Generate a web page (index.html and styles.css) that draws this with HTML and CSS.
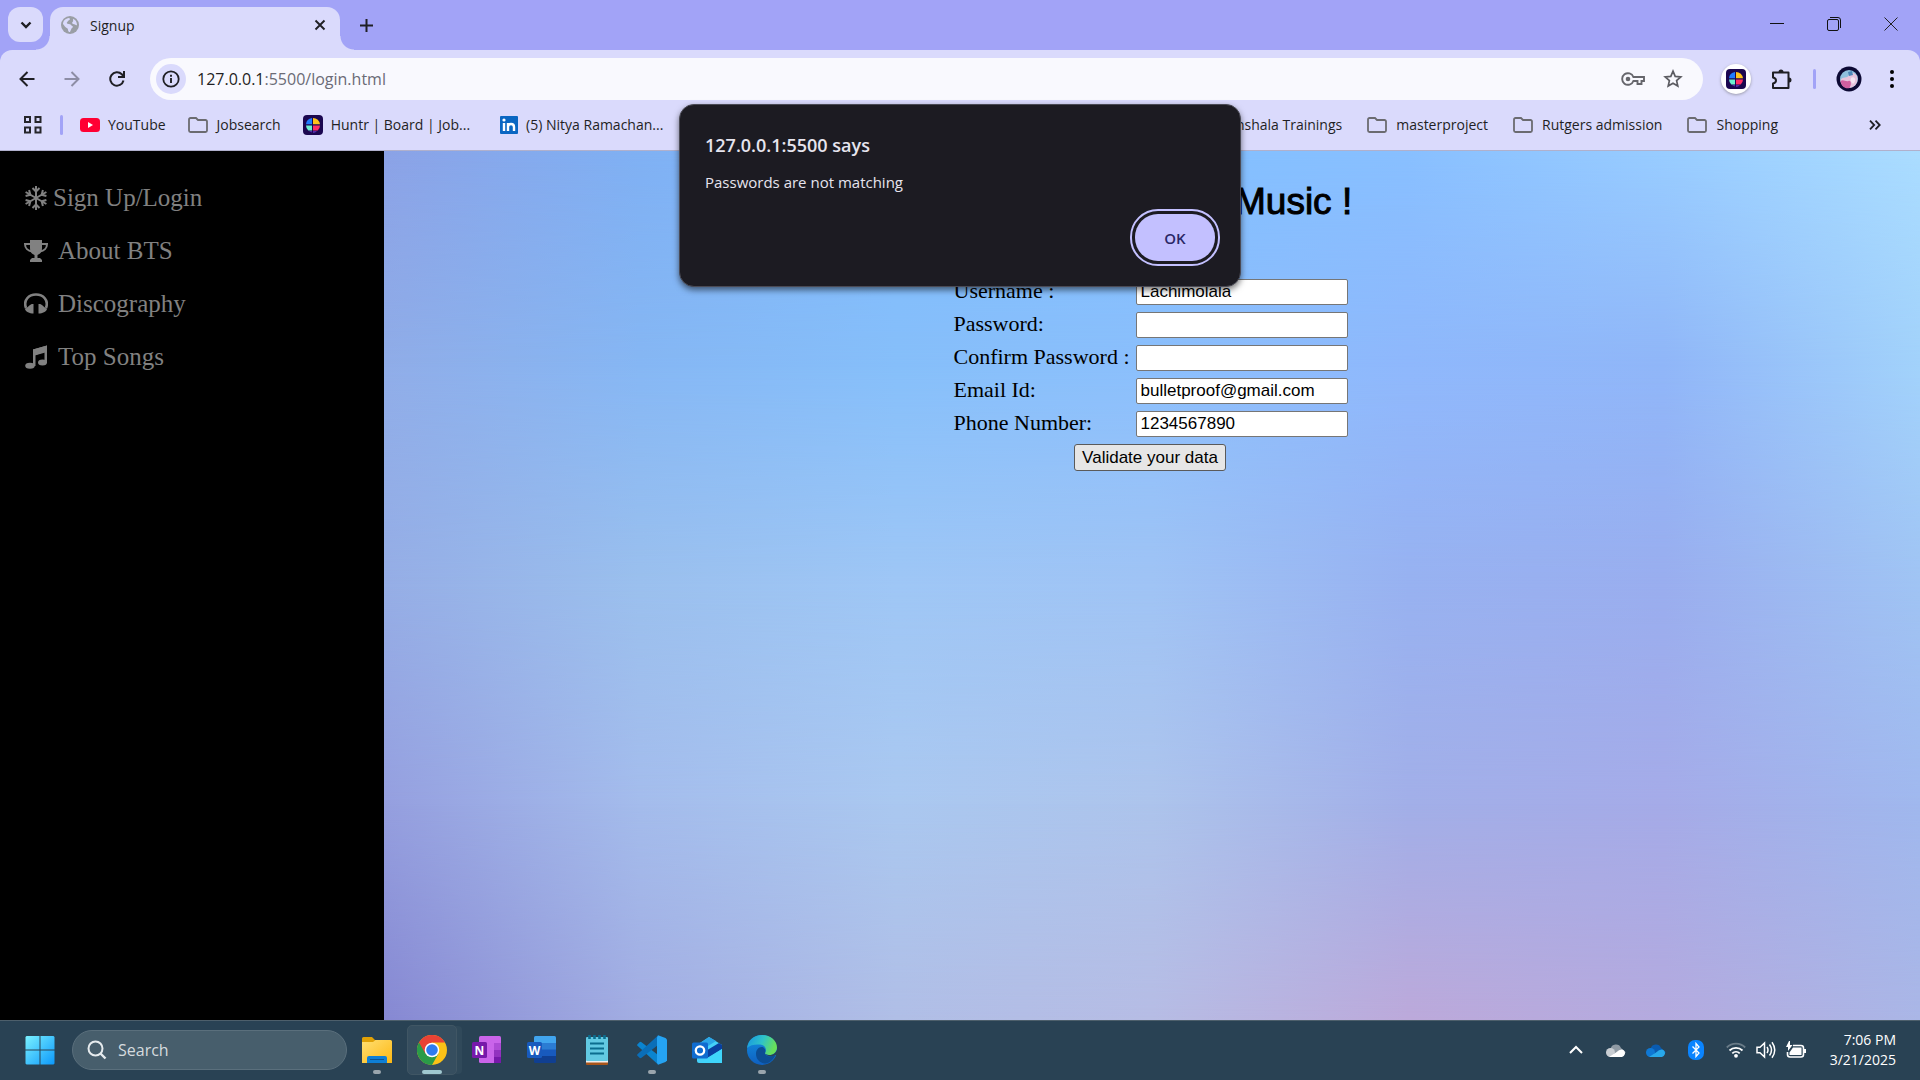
FILE: index.html
```html
<!DOCTYPE html>
<html lang="en">
<head>
<meta charset="utf-8">
<title>Signup</title>
<link rel="stylesheet" href="styles.css">
</head>
<body>
<svg class="sprite" aria-hidden="true">
  <defs>
    <symbol id="folder" viewBox="0 0 20 16"><path d="M1 3.200V13.500A1.500 1.500 0 0 0 2.500 15H17.500A1.500 1.500 0 0 0 19 13.500V4.500A1.500 1.500 0 0 0 17.500 3H10L8 1H2.500A1.500 1.500 0 0 0 1 2.500Z" fill="none" stroke="#6b6b70" stroke-width="1.800"/></symbol>
    <symbol id="huntr" viewBox="0 0 20 20">
      <rect width="20" height="20" rx="4" fill="#1b0750"/>
      <path d="M9 3A7 7 0 0 0 3 9.300H9Z" fill="#1f7bff"/>
      <path d="M10 3A7 7 0 0 1 17 9.300H10Z" fill="#ffc21a"/>
      <path d="M3 10.500H9V15.500H5.300A7 7 0 0 1 3 10.500Z" fill="#6cf0d0"/>
      <path d="M10 10.500H17A7 7 0 0 1 14.700 15.500H10Z" fill="#ff2d66"/>
      <path d="M6 16.500H9V17.300A7 7 0 0 1 6 16.500ZM10 16.500H14A7 7 0 0 1 10 17.500Z" fill="#8a4dff"/>
    </symbol>
  </defs>
</svg>

<header class="chrome">
  <div class="tabstrip">
    <button class="tab-search" aria-label="Search tabs"><svg width="12" height="8" viewBox="0 0 12 8"><path d="M1.500 1.500 6 6l4.500-4.500" fill="none" stroke="#1f1f24" stroke-width="2.400"/></svg></button>
    <div class="tab">
      <svg width="18" height="18" viewBox="0 0 18 18"><circle cx="9" cy="9" r="9" fill="#9a9ea5"/><path d="M2 8C2 5 4.500 2.300 8 2c1.500.5 1 1.800 0 2.200C6.500 4.500 7 6 5.800 6.500 5.500 8 7 8 9 8.200c1.500.3 1.200 1.800 2.800 2 .5 1.500-1.300 1.600-1.500 2.800L9 16C6.500 16 7.500 13.500 6.500 12.500 4 11.500 3.500 9.500 2 8Zm10-5.300C14.500 3.500 16 6 16 9c-1 .8-1.700-.8-2.800-.8C11.500 8 10.500 7 11.500 6c1-.7.500-2 .5-3.300Z" fill="#dadafc"/></svg>
      <span class="tab-title">Signup</span>
      <button class="icon-btn" aria-label="Close tab"><svg width="12" height="12" viewBox="0 0 12 12"><path d="M1.500 1.500l9 9M10.500 1.500l-9 9" stroke="#1f1f24" stroke-width="1.900"/></svg></button>
    </div>
    <button class="icon-btn new-tab" aria-label="New tab"><svg width="13" height="13" viewBox="0 0 13 13"><path d="M6.500 0v13M0 6.500h13" stroke="#1f1f24" stroke-width="2"/></svg></button>
    <div class="window-controls">
      <button class="icon-btn" aria-label="Minimize"><svg width="14" height="14" viewBox="0 0 14 14"><path d="M0 6.500h14" stroke="#111" /></svg></button>
      <button class="icon-btn" aria-label="Restore"><svg width="14" height="14" viewBox="0 0 14 14"><rect x=".5" y="2.500" width="11" height="11" rx="1.500" fill="none" stroke="#111"/><path d="M3 .5h8a2.500 2.500 0 0 1 2.500 2.500v8" fill="none" stroke="#111"/></svg></button>
      <button class="icon-btn" aria-label="Close"><svg width="14" height="14" viewBox="0 0 14 14"><path d="M.5.5l13 13M13.500.5l-13 13" stroke="#222"/></svg></button>
    </div>
  </div>

  <div class="toolbar">
    <nav class="history">
      <button class="icon-btn" aria-label="Back"><svg width="16" height="16" viewBox="0 0 16 16"><path d="M15.500 8H2M8.500 1 1.500 8l7 7" fill="none" stroke="#1f1f24" stroke-width="2"/></svg></button>
      <button class="icon-btn" aria-label="Forward"><svg width="16" height="16" viewBox="0 0 16 16"><path d="M.5 8H14M7.500 1l7 7-7 7" fill="none" stroke="#8d8da5" stroke-width="2"/></svg></button>
      <button class="icon-btn" aria-label="Reload"><svg width="16" height="16" viewBox="0 0 16 16"><path d="M14.500 9.500A6.700 6.700 0 1 1 12.800 3.300L14.800 5.500M15 0v6H9" fill="none" stroke="#1f1f24" stroke-width="2"/></svg></button>
    </nav>
    <div class="address">
      <button class="site-info" aria-label="Site information"><svg width="18" height="18" viewBox="0 0 18 18"><circle cx="9" cy="9" r="7.700" fill="none" stroke="#1f1f24" stroke-width="1.800"/><path d="M9 8v5M9 4.800v2" stroke="#1f1f24" stroke-width="1.900"/></svg></button>
      <span class="url">127.0.0.1<span class="url-path">:5500/login.html</span></span>
      <button class="icon-btn" aria-label="Passwords"><svg width="24" height="14" viewBox="0 0 24 14"><path d="M12.400 5A5.800 5.800 0 1 0 12.400 9H16.500V12H20.500V9H23V5Z" fill="none" stroke="#66666c" stroke-width="1.900"/><circle cx="7" cy="7" r="2.300" fill="#66666c"/></svg></button>
      <button class="icon-btn star" aria-label="Bookmark"><svg width="20" height="20" viewBox="0 0 20 20"><path d="M10 2.200l2.200 5.200 5.600.5-4.200 3.700 1.200 5.500L10 14.200l-4.800 2.900 1.200-5.500L2.200 7.900l5.600-.5Z" fill="none" stroke="#5c5c62" stroke-width="1.700"/></svg></button>
    </div>
    <div class="actions">
      <button class="ext" aria-label="Huntr"><svg width="20" height="20"><use href="#huntr"/></svg></button>
      <button class="icon-btn" aria-label="Extensions"><svg width="22" height="22" viewBox="0 0 22 22"><path d="M2 4.500H17.500V20H2V15.500C4.500 15 5 13.800 5 12.500S4.500 10 2 9.500Z" fill="none" stroke="#1f1f24" stroke-width="2" stroke-linejoin="round"/><path d="M7.500 4a2.500 2.500 0 0 1 5 0ZM18 9.500a2.500 2.500 0 0 1 0 5Z" fill="#1f1f24"/></svg></button>
      <span class="divider"></span>
      <button class="icon-btn" aria-label="Profile"><svg width="26" height="26" viewBox="0 0 26 26"><circle cx="13" cy="13" r="12.500" fill="#0c0934"/><circle cx="13" cy="13" r="9" fill="#8fc0de"/><path d="M4.500 14C7 10 11 13 13 9s6-2 8 1c2 8-3.500 12-8.500 12s-8-4-8-8Z" fill="#e6c3dc"/><path d="M4.500 15c3-2 5 1 8 0s3 4 1 7c-4 1-8-1-9-7Z" fill="#cf5f9f"/><path d="M15 12c2-2 5 0 4 3s-2 3-3 2-2-3-1-5Z" fill="#f4e4f2"/><path d="M12 6l4-1 1 4-4 1Z" fill="#4c86b8"/></svg></button>
      <button class="icon-btn menu" aria-label="Menu"><svg width="4" height="18" viewBox="0 0 4 18"><circle cx="2" cy="2" r="2"/><circle cx="2" cy="9" r="2"/><circle cx="2" cy="16" r="2"/></svg></button>
    </div>
  </div>

  <nav class="bookmarks">
    <button class="icon-btn" aria-label="Apps"><svg width="20" height="20" viewBox="0 0 20 20"><path d="M2 2h5v5H2ZM12.500 2h5v5h-5ZM2 12.500h5v5H2ZM12.500 12.500h5v5h-5Z" fill="none" stroke="#26262b" stroke-width="2"/></svg></button>
    <span class="divider"></span>
    <a href="#"><svg width="20" height="14" viewBox="0 0 20 14"><rect width="20" height="14" rx="3.500" fill="#ff0033"/><path d="M8 4v6l5-3Z" fill="#fff"/></svg>YouTube</a>
    <a class="folder" href="#"><svg width="20" height="16"><use href="#folder"/></svg>Jobsearch</a>
    <a href="#"><svg width="20" height="20"><use href="#huntr"/></svg>Huntr | Board | Job...</a>
    <a class="linkedin" href="#"><svg width="18" height="18" viewBox="0 0 18 18"><rect width="18" height="18" rx="1" fill="#0a66c2"/><path d="M4 7v8M8 15V7M8 11c0-4 6-4 6 0v4" fill="none" stroke="#fff" stroke-width="2.400"/><circle cx="4" cy="4" r="1.600" fill="#fff"/></svg>(5) Nitya Ramachan...</a>
    <div class="bookmarks-end">
      <a href="#">Internshala Trainings</a>
      <a class="folder" href="#"><svg width="20" height="16"><use href="#folder"/></svg>masterproject</a>
      <a class="folder" href="#"><svg width="20" height="16"><use href="#folder"/></svg>Rutgers admission</a>
      <a class="folder" href="#"><svg width="20" height="16"><use href="#folder"/></svg>Shopping</a>
      <button class="icon-btn more" aria-label="More bookmarks"><svg width="12" height="10" viewBox="0 0 12 10"><path d="M1 .7 5.200 5 1 9.300M6.500.7 10.700 5 6.500 9.300" fill="none" stroke="#1f1f24" stroke-width="1.800"/></svg></button>
    </div>
  </nav>
</header>

<div class="page">
  <nav class="sidebar">
    <a href="#"><svg width="24" height="26" viewBox="0 0 24 26"><g fill="none" stroke="#818181" stroke-width="2"><path id="arm" d="M12 1v24M8.500 3l3.500 3.500L15.500 3M8.500 23l3.500-3.500 3.500 3.500"/><use href="#arm" transform="rotate(60 12 13)"/><use href="#arm" transform="rotate(120 12 13)"/></g></svg>Sign Up/Login</a>
    <a class="spaced" href="#"><svg width="24" height="24" viewBox="0 0 24 24"><path d="M6 1h12v8c0 4-2 6-4.500 7v3H16l2 2v2H6v-2l2-2h2.500v-3C8 15 6 13 6 9Z" fill="#818181"/><path d="M6 5H1c0 4 3 7 7 7.500M18 5h5c0 4-3 7-7 7.500" fill="none" stroke="#818181" stroke-width="2"/></svg>About BTS</a>
    <a class="spaced" href="#"><svg width="24" height="24" viewBox="0 0 24 24"><path d="M2 16C-1 8 5 2.500 12 2.500S25 8 22 16" fill="none" stroke="#818181" stroke-width="2.600"/><path d="M9.500 12v9.500H8C4 21 1 19 1 16.500c3-.5 5-4.500 7-4.500ZM14.500 12v9.500H16c4-.5 7-2.500 7-5-3-.5-5-4.500-7-4.500Z" fill="#818181"/></svg>Discography</a>
    <a class="spaced" href="#"><svg width="24" height="24" viewBox="0 0 24 24"><path d="M9 4.500 23 .5V18H20.500V7L11.500 10V21H9Z" fill="#818181"/><path d="M9 4.500 23 .5V7L9 11Z" fill="#818181"/><ellipse cx="6" cy="20.800" rx="4.800" ry="3" fill="#818181"/><ellipse cx="18.500" cy="17.500" rx="4.500" ry="3" fill="#818181"/></svg>Top Songs</a>
  </nav>

  <main class="content">
    <div class="backdrop"><i></i><i></i><i></i><i></i></div>
    <h1>Welcome to BTS Music !</h1>
    <form>
      <table>
        <tr><td><label for="user">Username :</label></td><td><input id="user" type="text" value="Lachimolala"></td></tr>
        <tr><td><label for="pass">Password:</label></td><td><input id="pass" type="password"></td></tr>
        <tr><td><label for="confirm">Confirm Password :</label></td><td><input id="confirm" type="password"></td></tr>
        <tr><td><label for="email">Email Id:</label></td><td><input id="email" type="text" value="bulletproof@gmail.com"></td></tr>
        <tr><td><label for="phone">Phone Number:</label></td><td><input id="phone" type="text" value="1234567890"></td></tr>
        <tr><td class="submit" colspan="2"><button type="button">Validate your data</button></td></tr>
      </table>
    </form>
  </main>
</div>

<section class="dialog" role="alertdialog" aria-labelledby="dialog-title">
  <h2 id="dialog-title">127.0.0.1:5500 says</h2>
  <p>Passwords are not matching</p>
  <button>OK</button>
</section>

<footer class="taskbar">
  <button class="app start" aria-label="Start"><svg width="30" height="30" viewBox="0 0 30 30"><defs><linearGradient id="win" gradientUnits="userSpaceOnUse" x1="0" y1="0" x2="30" y2="30"><stop stop-color="#7df3ff"/><stop offset="1" stop-color="#0a97fb"/></linearGradient></defs><path d="M1.500 1H14.500V14.500H.5V2ZM15.500 1H28.500L29.500 2V14.500H15.500ZM.5 15.500H14.500V29.500H1.500L.5 28.500ZM15.500 15.500H29.500V28.500L28.500 29.500H15.500Z" fill="url(#win)"/></svg></button>
  <label class="search">
    <svg width="20" height="20" viewBox="0 0 20 20"><circle cx="8.500" cy="8.500" r="7" fill="none" stroke="#e6ebee" stroke-width="2"/><path d="M13.500 13.500l5 5" stroke="#e6ebee" stroke-width="2.400"/></svg>
    <input type="text" placeholder="Search" aria-label="Search">
  </label>
  <div class="apps">
    <button class="app running" aria-label="File Explorer"><svg width="30" height="30" viewBox="0 0 30 30"><defs><linearGradient id="fe" x1="0" y1="0" x2="1" y2="1"><stop stop-color="#ffdf72"/><stop offset="1" stop-color="#fdb813"/></linearGradient></defs><path d="M0 3.500A1.500 1.500 0 0 1 1.500 2H10L13 5H28V12H0Z" fill="#e0a106"/><path d="M0 7H11L13.500 5H28.500A1.500 1.500 0 0 1 30 6.500V28H0Z" fill="url(#fe)"/><path d="M5 28V23A2 2 0 0 1 7 21H23A2 2 0 0 1 25 23V28Z" fill="#0e7fd6"/><path d="M8 24.500H22" stroke="#0b5392"/></svg></button>
    <button class="app active" aria-label="Chrome"><svg width="30" height="30" viewBox="0 0 30 30"><circle cx="15" cy="15" r="15" fill="#fbc116"/><path d="M15 15 2 7.500A15 15 0 0 0 15 30L21.500 18.500Z" fill="#2a9b48"/><path d="M2 7.500A15 15 0 0 1 28 7.500H15L8.500 18.700Z" fill="#e94235"/><circle cx="15" cy="15" r="7.300" fill="#fff"/><circle cx="15" cy="15" r="5.800" fill="#2e7bf0"/></svg></button>
    <button class="app" aria-label="OneNote"><svg width="30" height="30" viewBox="0 0 30 30"><rect x="7" y="1" width="22" height="27" rx="1.500" fill="#ca64ea"/><path d="M22 8h7v7h-7Z" fill="#ae4bd5"/><path d="M22 15h7v6.500h-7Z" fill="#9332bf"/><path d="M22 21.500h7V28h-7Z" fill="#7719aa"/><rect y="7" width="15" height="16" rx="1.500" fill="#7719aa"/><text x="7.500" y="19.500">N</text></svg></button>
    <button class="app" aria-label="Word"><svg width="30" height="30" viewBox="0 0 30 30"><rect x="7" y="1" width="22" height="27" rx="1.500" fill="#103f91"/><path d="M7 14h22v7H7Z" fill="#185abd"/><path d="M7 8h22v6.500H7Z" fill="#2b7cd3"/><path d="M8.500 1h19A1.500 1.500 0 0 1 29 2.500V8H7V2.500A1.500 1.500 0 0 1 8.500 1Z" fill="#41a5ee"/><rect y="7" width="15" height="16" rx="1.500" fill="#185abd"/><text x="7.500" y="19.500">W</text></svg></button>
    <button class="app" aria-label="Notepad"><svg width="30" height="30" viewBox="0 0 30 30"><rect x="4" y="24" width="22" height="6" rx="1" fill="#a8551a"/><rect x="4" y="24" width="22" height="3.500" fill="#eee"/><rect x="4" y="2" width="22" height="24" rx="1" fill="#62c9e2"/><path d="M8 8.500H22M8 13.500H22M8 18.500H22" stroke="#0b6d8e" stroke-width="2"/><path d="M7.500 0v4M12.500 0v4M17.500 0v4M22.500 0v4" stroke="#0b6d8e" stroke-width="2.600"/></svg></button>
    <button class="app running" aria-label="Visual Studio Code"><svg width="30" height="30" viewBox="0 0 30 30"><path d="M.5 10.800a1 1 0 0 1 0-1.500L2.500 7.300a1.500 1.500 0 0 1 2 0L23 21.500 21 29.500Z" fill="#0a84d0"/><path d="M.5 19.200a1 1 0 0 0 0 1.500L2.500 22.700a1.500 1.500 0 0 0 2 0L23 8.500 21 .5Z" fill="#0a6eb8"/><path d="M21 .3 28.500 3 30 4.500V25.500L28.500 27 21 29.700 20 27.500V2.500Z" fill="#25a3f2"/></svg></button>
    <button class="app" aria-label="Outlook"><svg width="30" height="30" viewBox="0 0 30 30"><path d="M5 10 17 2l13 8v16a2 2 0 0 1-2 2H7a2 2 0 0 1-2-2Z" fill="#45d0f8"/><path d="M5 10 17 2 24 6 8 16Z" fill="#2aa5e8"/><path d="M12 17 27 8l3 2v4L15 23Z" fill="#0a3f9f"/><path d="M16 23 30 14V28H9Z" fill="#3fd5fb"/><rect y="7.500" width="16" height="16" rx="1.500" fill="#0f6cd0"/><circle cx="8" cy="15.500" r="4.200" fill="none" stroke="#fff" stroke-width="2.300"/></svg></button>
    <button class="app running" aria-label="Edge"><svg width="30" height="30" viewBox="0 0 30 30"><defs><linearGradient id="e1" x1="0" y1="0" x2="1" y2=".3"><stop stop-color="#1694e4"/><stop offset=".55" stop-color="#2fc3c8"/><stop offset="1" stop-color="#68e05a"/></linearGradient><linearGradient id="e2" x1="0" y1="0" x2="0" y2="1"><stop stop-color="#1290e0"/><stop offset="1" stop-color="#0f5fc0"/></linearGradient></defs><circle cx="15" cy="15" r="15" fill="url(#e2)"/><path d="M0 13C1 5 7 0 15 0c9 0 15 6 15 12.500 0 5-4 7.500-7.500 7.500-3 0-5-1-4.500-2 2-3 1-8-5-8.500C8 9 3 10 0 13Z" fill="url(#e1)"/><path d="M9 19c0-5 4-8 7.500-6.500C19.500 15 18 17 18 18.500 19 22 25 22 28.500 20 26 26 21 28.500 17.500 28.500 13 28 9 24 9 19Z" fill="#0c4d94"/><path d="M18 18c.5 1.500 2.500 2 4.500 2C26 20 29 18 30 14.500V20L28.500 20C25 22 19.500 22 18 18Z" fill="#294254"/></svg></button>
  </div>
  <div class="tray">
    <button class="app" aria-label="Show hidden icons"><svg width="14" height="10" viewBox="0 0 14 10"><path d="M1 8l6-6 6 6" fill="none" stroke="#fff" stroke-width="2"/></svg></button>
    <button class="app" aria-label="Cloud"><svg width="20" height="13" viewBox="0 0 20 13"><path d="M4.500 5A5.500 5.500 0 0 1 15 4L20 8.500 10 10Z" fill="#8f9aa4"/><circle cx="4.500" cy="8.500" r="4.500" fill="#c9ced3"/><path d="M3 13 10 8.500Q15 4 18 6.500A4 4 0 0 1 16 13Z" fill="#fff"/></svg></button>
    <button class="app" aria-label="OneDrive"><svg width="20" height="13" viewBox="0 0 20 13"><path d="M4.500 5A5.500 5.500 0 0 1 15 4L20 8.500 10 10Z" fill="#0a5bb0"/><circle cx="4.500" cy="8.500" r="4.500" fill="#0f78d4"/><path d="M3 13 10 8.500Q15 4 18 6.500A4 4 0 0 1 16 13Z" fill="#28a8ea"/></svg></button>
    <button class="app" aria-label="Bluetooth"><svg width="16" height="20" viewBox="0 0 16 20"><rect width="16" height="20" rx="7" fill="#0a84ff"/><path d="M4.500 6.500 11 13l-3 3.500V3.500L11 7l-6.500 6.500" fill="none" stroke="#fff" stroke-width="1.300"/></svg></button>
    <button class="status" aria-label="Network, volume and battery">
      <svg width="20" height="16" viewBox="0 0 20 16"><g fill="none" stroke="#fff" stroke-width="1.800"><path d="M.8 5.500a13 13 0 0 1 18.400 0" opacity=".3"/><path d="M3.500 8.500a9.300 9.300 0 0 1 13 0M6.300 11.300a5.300 5.300 0 0 1 7.400 0"/></g><circle cx="10" cy="13.800" r="1.900" fill="#fff"/></svg>
      <svg width="20" height="18" viewBox="0 0 20 18"><path d="M1 6.200H4L8.500 2V16L4 11.800H1ZM11 6q2 3 0 6M13.500 3.500q4 5.500 0 11M16 1.200q5.500 7.800 0 15.600" fill="none" stroke="#fff" stroke-width="1.500"/></svg>
      <svg width="20" height="18" viewBox="0 0 20 18"><path d="M7 4.500H15A2.500 2.500 0 0 1 17.500 7V13.500A2.500 2.500 0 0 1 15 16H4A2.500 2.500 0 0 1 1.500 13.500V11" fill="none" stroke="#fff" stroke-width="1.600"/><path d="M7 6.500H15.500V14H3.500V11.500ZM18 8h2v4h-2ZM3 0 0 6H2V10L6.500 4H4V0Z" fill="#fff"/></svg>
    </button>
    <div class="clock"><span>7:06 PM</span><span>3/21/2025</span></div>
  </div>
</footer>
</body>
</html>
```

FILE: styles.css
```css
* { box-sizing: border-box; }

body {
  margin: 0;
  min-height: 100vh;
  display: flex;
  flex-direction: column;
  position: relative;
  font-family: "Open Sans", "Noto Sans", sans-serif;
  font-size: 14px;
  color: #1f1f24;
}

svg { display: block; flex: none; }
.sprite { position: absolute; width: 0; height: 0; }
button { font-family: inherit; }
a { color: inherit; text-decoration: none; }

.icon-btn {
  display: flex;
  align-items: center;
  justify-content: center;
  padding: 0;
  border: 0;
  background: none;
}

.divider { width: 3px; height: 20px; border-radius: 2px; background: #a2a3f7; }

/* Browser frame */
.chrome { background: #a2a3f7; }

.tabstrip {
  display: flex;
  align-items: flex-start;
  height: 50px;
  padding: 7px 22px 0 8px;
}

.tab-search {
  display: flex;
  align-items: center;
  justify-content: center;
  width: 35px;
  height: 35px;
  margin-right: 7px;
  padding: 0;
  border: 0;
  border-radius: 12px;
  background: #dadafc;
}

.tab {
  position: relative;
  display: flex;
  align-items: center;
  gap: 11px;
  width: 290px;
  height: 43px;
  padding: 0 14px 7px 11px;
  border-radius: 13px 13px 0 0;
  background: #dadafc;
}

.tab::before,
.tab::after {
  content: "";
  position: absolute;
  bottom: 0;
  width: 14px;
  height: 14px;
}
.tab::before { right: 100%; background: radial-gradient(circle at 0 0, transparent 13px, #dadafc 14px); }
.tab::after { left: 100%; background: radial-gradient(circle at 100% 0, transparent 13px, #dadafc 14px); }
.tab-title { flex: 1; }

.new-tab { width: 30px; height: 36px; margin-left: 11px; }

.window-controls { display: flex; gap: 43px; height: 34px; margin-left: auto; }

.toolbar {
  display: flex;
  align-items: center;
  height: 59px;
  padding: 0 26px 1px 19px;
  border-radius: 12px 12px 0 0;
  background: #dadafc;
}

.history { display: flex; gap: 29px; width: 131px; }

.address {
  display: flex;
  align-items: center;
  flex: 1;
  height: 42px;
  padding: 0 20px 0 6px;
  border-radius: 21px;
  background: #f9f9fe;
}

.site-info {
  display: flex;
  align-items: center;
  justify-content: center;
  width: 30px;
  height: 30px;
  padding: 0;
  border: 0;
  border-radius: 50%;
  background: #dadafc;
}

.url { flex: 1; margin-left: 11px; font-size: 16px; }
.url-path { color: #6b6b76; }
.star { margin-left: 18px; }

.actions { display: flex; align-items: center; gap: 20px; margin-left: 18px; }
.menu { margin-left: 8px; }

.ext {
  display: flex;
  align-items: center;
  justify-content: center;
  width: 30px;
  height: 30px;
  padding: 0;
  border: 0;
  border-radius: 50%;
  background: #fff;
  box-shadow: 0 1px 3px #6668;
}

.bookmarks {
  display: flex;
  align-items: center;
  gap: 22px;
  height: 42px;
  padding: 0 39px 10px 23px;
  border-bottom: 1px solid #b0b0cc;
  background: #dadafc;
}

.bookmarks > .divider { margin: 0 -5px; }
.bookmarks a { display: flex; align-items: center; gap: 8px; white-space: nowrap; }
.bookmarks .folder { gap: 9px; }
.linkedin { margin-left: 8px; }
.bookmarks-end { display: flex; align-items: center; gap: 25px; margin-left: auto; }
.more { margin-left: 66px; }

/* Web page */
.page { flex: 1; display: flex; }

.sidebar {
  width: 20%;
  padding: 20px 0 0 24px;
  background: #000;
  color: #818181;
  font: 25px/53px "Liberation Serif", serif;
}
.sidebar a { display: flex; align-items: center; gap: 5px; }
.sidebar .spaced { gap: 10px; }

.content {
  position: relative;
  flex: 1;
  display: flex;
  flex-direction: column;
  align-items: center;
  padding: 28px 4px 0 0;
  color: #000;
  font: 22px/26px "Liberation Serif", serif;
  background: linear-gradient(to right, #96aee6, #9bc0ee, #9fc7f6, #a0c4f5, #98b2f1, #9aaeef, #a0c4f4);
}

/* The backdrop blends horizontal gradients into one another down the page */
.backdrop i { position: absolute; inset: 0; }
.backdrop i:nth-child(1) {
  background: linear-gradient(to right, #90ade8, #86b7f4, #86bffa, #8bbffc, #8fb8fc, #90b6f8, #a2d2fb);
  -webkit-mask-image: linear-gradient(#000 25%, transparent 50%);
  mask-image: linear-gradient(#000 25%, transparent 50%);
}
.backdrop i:nth-child(2) {
  background: linear-gradient(to right, #8ba2e6, #7fb0f3, #80bcff, #82bfff, #88bfff, #98ccff, #aadcff);
  -webkit-mask-image: linear-gradient(#000, transparent 25%);
  mask-image: linear-gradient(#000, transparent 25%);
}
.backdrop i:nth-child(3) {
  background: linear-gradient(to right, #959fdf, #a4bcec, #aac8f0, #adc4ec, #a2afe8, #a5abe8, #a0b8ee);
  -webkit-mask-image: linear-gradient(transparent 50%, #000 75%);
  mask-image: linear-gradient(transparent 50%, #000 75%);
}
.backdrop i:nth-child(4) {
  background: linear-gradient(to right, #8688d2, #a2ade2, #b0bee6, #b6bce4, #bca9da, #b4aade, #aab6e6);
  -webkit-mask-image: linear-gradient(transparent 75%, #000);
  mask-image: linear-gradient(transparent 75%, #000);
}

.content h1,
.content form { position: relative; }

.content h1 {
  margin: 0 0 49px;
  font: 37px/46px "Liberation Sans", sans-serif;
  -webkit-text-stroke: 1px #000;
}

.content table { border-spacing: 3px; }
.content td { height: 30px; padding: 0 1px 2px; }
.content td:first-child { width: 180px; }
.content td + td,
.content td.submit { padding: 0; }
.content label { display: block; }

.content input {
  display: block;
  width: 212px;
  height: 26px;
  padding: 1px 4px;
  border: 1px solid #767676;
  border-radius: 2px;
  background: #fff;
  font: 17px "Liberation Sans", sans-serif;
}

.content .submit { text-align: center; }
.content .submit button {
  width: 152px;
  height: 27px;
  padding: 0;
  border: 1px solid #5a5a5a;
  border-radius: 3px;
  background: #e6e6e6;
  color: #000;
  font: 17px "Liberation Sans", sans-serif;
}

/* Alert over the page */
.dialog {
  position: absolute;
  top: 104px;
  left: 50%;
  display: flex;
  flex-direction: column;
  width: 562px;
  margin-left: -281px;
  padding: 24px 25px 25px;
  border: 1px solid #4a4a55;
  border-radius: 15px;
  background: #1c1b22;
  box-shadow: 0 3px 6px #0008;
  color: #e6e4ee;
}
.dialog h2 { margin: 0; font-size: 18px; font-weight: 600; line-height: 32px; }
.dialog p { margin: 9px 0 20px; font-size: 15px; line-height: 24px; }
.dialog button {
  align-self: flex-end;
  width: 80px;
  height: 47px;
  border: 0;
  border-radius: 23px;
  outline: 2px solid #c3c0ff;
  outline-offset: 3px;
  background: #c3c0ff;
  color: #2a2766;
  font-size: 15px;
  font-weight: 600;
}

/* Taskbar */
.taskbar {
  display: flex;
  align-items: center;
  height: 60px;
  padding: 0 24px 1px 15px;
  border-top: 1px solid #4d5f6b;
  background: #294254;
  color: #fff;
}

.app {
  position: relative;
  display: flex;
  align-items: center;
  justify-content: center;
  width: 50px;
  height: 50px;
  padding: 0;
  border: 1px solid transparent;
  border-radius: 5px;
  background: none;
}
.app text { fill: #fff; font: bold 12px "Open Sans", sans-serif; text-anchor: middle; }
.app.active { border-color: #405664; background: #364e5f; box-shadow: 6px 0 0 -1px #30495a; }
.app.active::after,
.app.running::after {
  content: "";
  position: absolute;
  bottom: 0;
  width: 8px;
  height: 4px;
  border-radius: 2px;
  background: #9aa5ad;
}
.app.active::after { width: 20px; background: #a0c8d0; }

.search {
  display: flex;
  align-items: center;
  gap: 11px;
  width: 275px;
  height: 40px;
  margin: 0 5px 0 7px;
  padding: 0 14px;
  border: 1px solid #5a6f7c;
  border-radius: 20px;
  background: #475e6c;
}
.search input {
  width: 100%;
  padding: 0;
  border: 0;
  background: none;
  color: #fff;
  font: 16px "Open Sans", sans-serif;
}
.search input::placeholder { color: #d5dbdf; opacity: 1; }

.apps { display: flex; gap: 5px; }
.tray { display: flex; align-items: center; margin-left: auto; }
.tray .app { width: 40px; }
.status {
  display: flex;
  align-items: center;
  gap: 10px;
  padding: 0 10px;
  border: 0;
  background: none;
}
.clock {
  display: flex;
  flex-direction: column;
  width: 80px;
  text-align: right;
  font-size: 14px;
  line-height: 20px;
}
```
